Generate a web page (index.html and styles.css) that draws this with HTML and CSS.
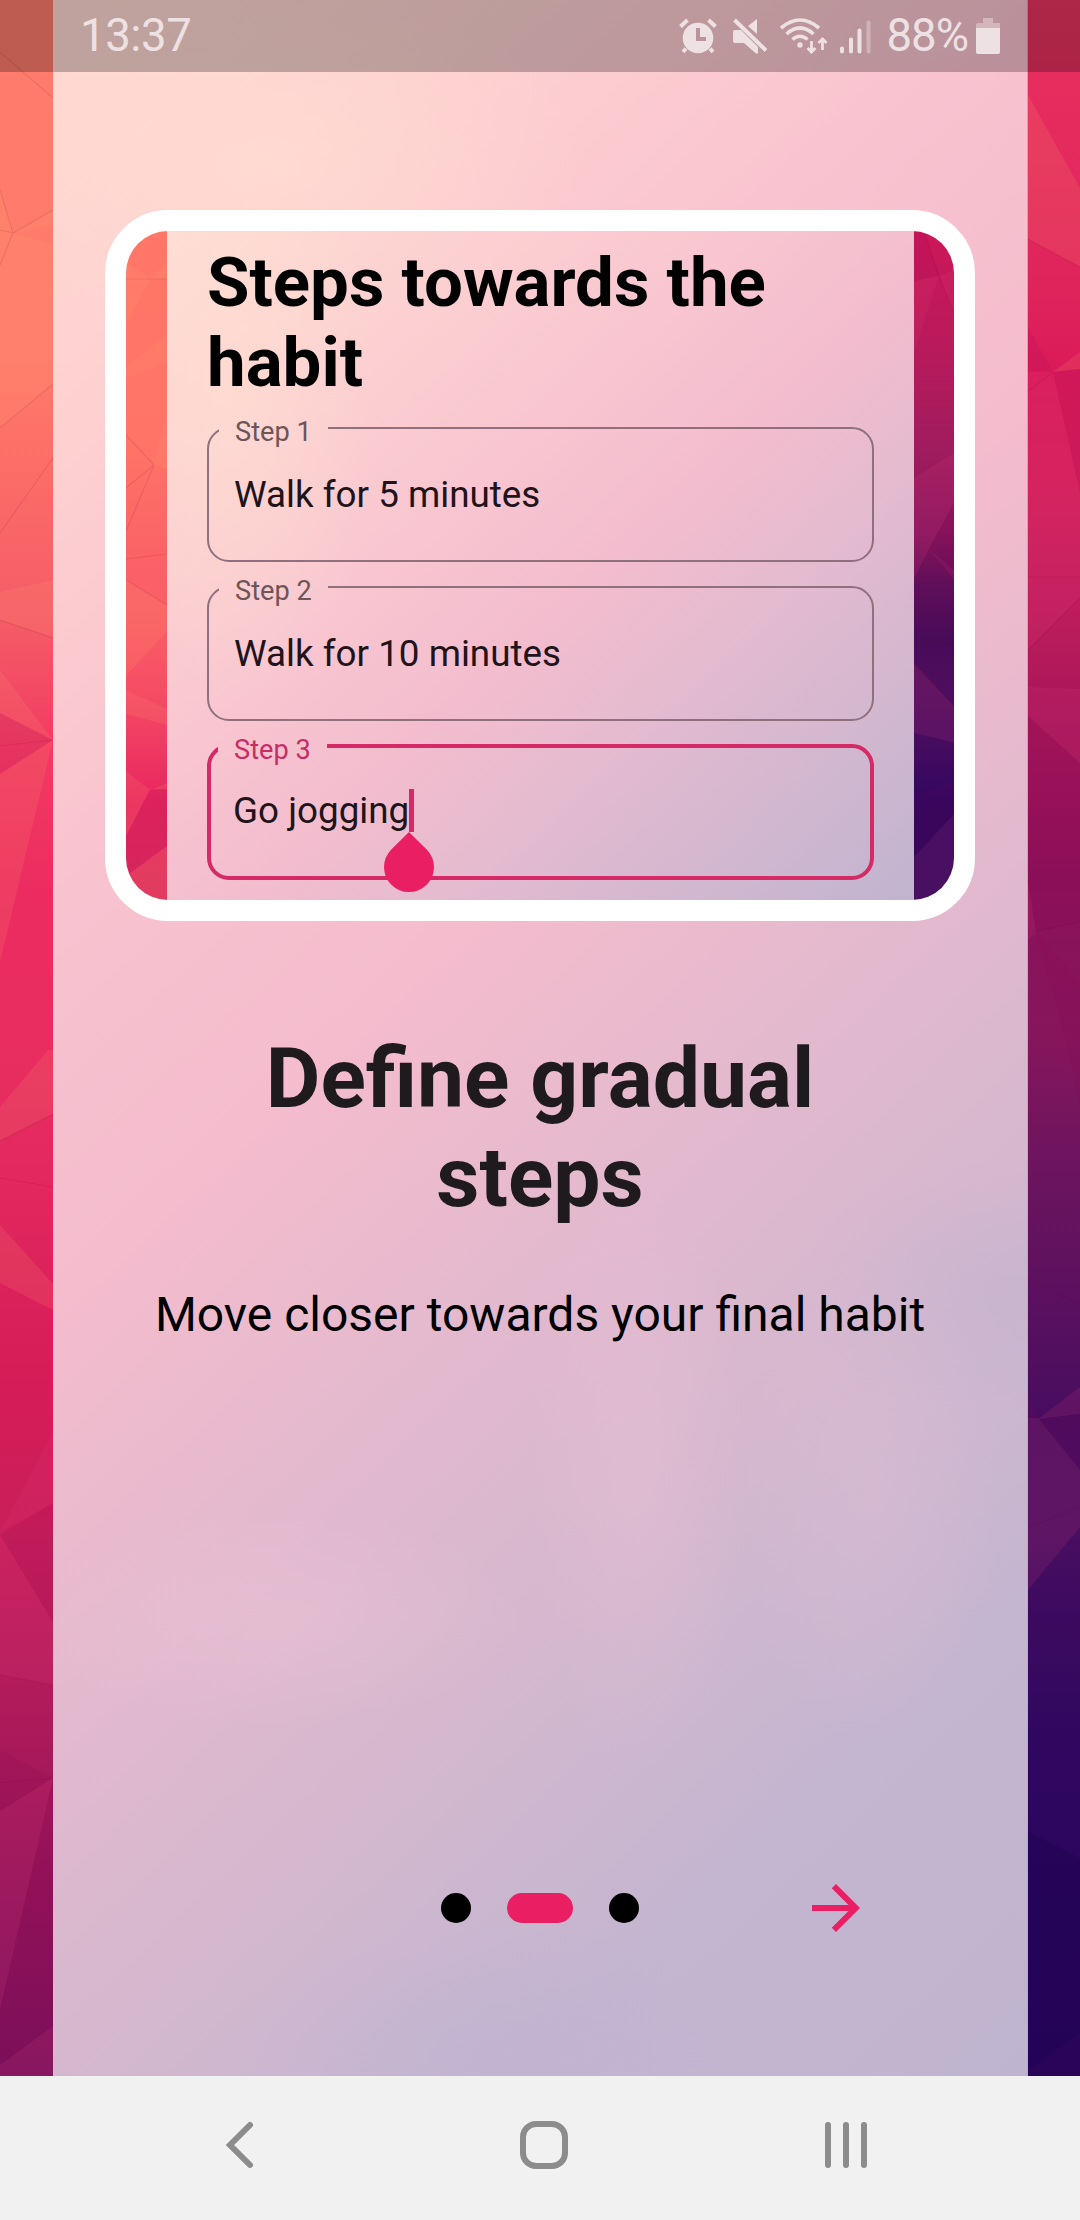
FILE: index.html
```html
<!DOCTYPE html>
<html lang="en">
<head>
<meta charset="utf-8">
<title>Define gradual steps</title>
<link rel="stylesheet" href="styles.css">
</head>
<body>
<div class="screen">
  <div class="stage">
    <svg class="strip" viewBox="0 0 53 2076" preserveAspectRatio="none">
      <defs><linearGradient id="wl" x1="0" y1="0" x2="0" y2="2076" gradientUnits="userSpaceOnUse">
        <stop offset="0" stop-color="#ff7b6b"/><stop offset=".17" stop-color="#ff7b6b"/><stop offset=".23" stop-color="#fc6c67"/><stop offset=".3" stop-color="#f55b67"/><stop offset=".36" stop-color="#f13b62"/><stop offset=".43" stop-color="#ec2c60"/><stop offset=".52" stop-color="#e72d60"/><stop offset=".6" stop-color="#de245c"/><stop offset=".67" stop-color="#d51c58"/><stop offset=".74" stop-color="#c81f5a"/><stop offset=".82" stop-color="#b01b5b"/><stop offset=".9" stop-color="#951459"/><stop offset="1" stop-color="#79115b"/>
      </linearGradient></defs>
      <path fill="url(#wl)" d="M0 0h53v2076H0z"/>
      <path class="glow" d="M0 190L13 233 53 210V225L13 233 53 244V384L0 428z"/>
      <path class="glow" d="M0 592L53 580V638L0 620zM0 670L53 740 0 713zM0 774L53 740 0 962zM0 1107L48 1050H53V1114L0 1141zM0 1225L53 1284V1310L0 1283z"/>
      <path class="glow-low" d="M0 1532L53 1432V1503zM0 1535L53 1622V1685L0 1675zM0 1811L53 1778 0 2010zM0 2065L53 2026V2076H0z"/>
      <path class="shade" d="M0 713L53 740 0 774zM0 1535L53 1503V1622zM0 1750L53 1778 0 1811zM53 1778V2026L0 2065V2010z"/>
      <path class="crease" d="M0 52L53 98M0 190L13 233 53 210M0 428L53 384M0 533L53 458M0 620L53 638M0 746L53 740M0 1141L53 1114M0 1178L53 1187M0 1675L53 1685M0 1783L53 1778M0 230L13 233 0 265"/>
    </svg>

    <main class="sheet">
      <section class="frame">
        <svg class="strip" viewBox="0 0 41 669" preserveAspectRatio="none">
          <defs><linearGradient id="cl" x1="0" y1="0" x2="0" y2="669" gradientUnits="userSpaceOnUse">
            <stop offset="0" stop-color="#ff7768"/><stop offset=".32" stop-color="#ff7467"/><stop offset=".49" stop-color="#fa6266"/><stop offset=".58" stop-color="#fa5e66"/><stop offset=".68" stop-color="#f64e65"/><stop offset=".75" stop-color="#f13e63"/><stop offset=".85" stop-color="#e8265f"/><stop offset="1" stop-color="#dc2c5e"/>
          </linearGradient></defs>
          <path fill="url(#cl)" d="M0 0h41v669H0z"/>
          <path class="glow" d="M0 31L24 48 41 31V48H24L0 94zM0 135L41 104V132L0 147zM28 234L41 180V238zM0 459L41 478V494L0 483zM0 540L24 559 41 552V558H24L0 605zM0 645L41 615V669H0zM0 349L41 374V400L0 445z"/>
          <path class="shade" d="M24 559H41V615L0 645V605z"/>
          <path class="crease" d="M0 204L28 234 0 257M28 234L0 300M0 328L41 323M0 349L41 374M0 48H41"/>
        </svg>
        <div class="capture">
          <h2 class="capture-title">Steps towards the habit</h2>
          <fieldset class="field"><legend>Step 1</legend><span class="value">Walk for 5 minutes</span></fieldset>
          <fieldset class="field"><legend>Step 2</legend><span class="value">Walk for 10 minutes</span></fieldset>
          <fieldset class="field active"><legend>Step 3</legend><span class="value">Go jogging<i class="caret"><svg class="handle" viewBox="0 0 50 61"><path fill="#e91e63" d="M25 0L42.7 17.4A25 25 0 1 1 7.3 17.4z"/></svg></i></span></fieldset>
        </div>
        <svg class="strip" viewBox="0 0 41 669" preserveAspectRatio="none">
          <defs><linearGradient id="cr" x1="0" y1="0" x2="0" y2="669" gradientUnits="userSpaceOnUse">
            <stop offset="0" stop-color="#cd1759"/><stop offset=".09" stop-color="#c2195a"/><stop offset=".18" stop-color="#b81a5b"/><stop offset=".33" stop-color="#9f1c5e"/><stop offset=".45" stop-color="#86155c"/><stop offset=".53" stop-color="#5f0e59"/><stop offset=".61" stop-color="#480b58"/><stop offset=".68" stop-color="#4e0e5e"/><stop offset=".78" stop-color="#430b60"/><stop offset=".85" stop-color="#30075f"/><stop offset="1" stop-color="#30075d"/>
          </linearGradient></defs>
          <path fill="url(#cr)" d="M0 0h41v669H0z"/>
          <path class="glow-low" d="M25 45L41 38V85L25 45 0 120V50zM0 247L41 222V270L15 318 0 307zM15 318L41 350V340zM0 348L15 318 0 307zM0 432L41 476V512L0 502zM0 626L41 582V669H0z"/>
          <path class="shade" d="M0 0H10L25 45 0 50zM15 318L41 270V350zM0 565L41 549V582L0 626z"/>
          <path class="crease" d="M0 410L41 414M0 432L41 476M10 0L25 45 41 85"/>
        </svg>
      </section>

      <h1 class="title">Define gradual steps</h1>
      <p class="subtitle">Move closer towards your final habit</p>

      <footer class="pager">
        <div class="dots"><span class="dot"></span><span class="dot current"></span><span class="dot"></span></div>
        <svg class="next" viewBox="0 0 24 24"><path fill="#e91e63" d="M12 4l-1.41 1.41L16.17 11H4v2h12.17l-5.58 5.59L12 20l8-8z"/></svg>
      </footer>
    </main>

    <svg class="strip" viewBox="0 0 52 2076" preserveAspectRatio="none">
      <defs><linearGradient id="wr" x1="0" y1="0" x2="0" y2="2076" gradientUnits="userSpaceOnUse">
        <stop offset="0" stop-color="#e7345f"/><stop offset=".05" stop-color="#e62c5e"/><stop offset=".14" stop-color="#df245c"/><stop offset=".18" stop-color="#da1a59"/><stop offset=".24" stop-color="#d2205b"/><stop offset=".29" stop-color="#c01d5b"/><stop offset=".34" stop-color="#a9175a"/><stop offset=".42" stop-color="#8c1159"/><stop offset=".5" stop-color="#86165c"/><stop offset=".55" stop-color="#70155e"/><stop offset=".62" stop-color="#5c115f"/><stop offset=".68" stop-color="#490d5f"/><stop offset=".74" stop-color="#480e60"/><stop offset=".77" stop-color="#3e0b60"/><stop offset=".84" stop-color="#2f075f"/><stop offset=".88" stop-color="#2d065f"/><stop offset="1" stop-color="#290459"/>
      </linearGradient></defs>
      <path fill="url(#wr)" d="M0 0h52v2076H0z"/>
      <path class="glow" d="M0 95L52 188V267L0 239zM25 372L52 352V369z"/>
      <path class="glow-low" d="M0 371H25L52 493V598L0 650zM0 687L52 689V763L0 716zM0 882L8 932 0 940zM10 1419L52 1387V1414zM0 1418H10L52 1470V1527L0 1590z"/>
      <path class="shade" d="M0 327L25 372H0zM25 372L52 369V493zM0 716L52 763V922L8 932 0 882zM40 1050L8 932 52 982V1105zM0 1395L10 1419H0zM10 1419L52 1414V1470z"/>
      <path fill="#1c0350" fill-opacity=".4" d="M0 1832L52 1858V2033L0 2070z"/>
      <path class="crease" d="M0 239L52 267M0 577H52M0 650L52 598M0 931H8L52 922M0 1277L52 1305M0 1528L52 1507M0 391L25 372"/>
    </svg>
  </div>

  <header class="status">
    <span class="clock">13:37</span>
    <svg class="status-icons" viewBox="0 0 194 36">
      <g fill="none" stroke="#eee1e3">
        <circle cx="19" cy="20" r="15.3" fill="#eee1e3" stroke="none"/>
        <path stroke-width="4" d="M1.500 8.500L8.500 2M29.500 2l7 6.500M7 30.500L4 34M31 30.500L34 34"/>
        <path stroke="#bb959b" stroke-width="4" d="M19 10v11h8"/>
        <path stroke-width="4" d="M55.500 2L87 32.500"/>
        <path fill="#eee1e3" stroke="none" d="M78 1v15l-9-8zM56 12h6l17 17v6.500h-2L65 25h-9q-2 0-2-2v-9q0-2 2-2z"/>
        <path stroke-width="3.600" d="M102 10Q121-6 140 10M107.500 16Q121 4 134.500 16M113.500 21.500Q121 15 128.500 21.500"/>
        <circle cx="121" cy="27" r="2.700" fill="#eee1e3" stroke="none"/>
        <path stroke-width="2.800" d="M132.500 23v11M128.500 30l4 4 4-4M143.500 32V21M139.500 25l4-4 4 4"/>
        <path stroke-width="4" stroke-linecap="round" d="M163 30.500v3M172 21.500v12M180.500 12.500v21"/>
        <path stroke-width="4" stroke-linecap="round" opacity=".4" d="M189.500 4.500v29"/>
      </g>
    </svg>
    <span class="percent">88%</span>
    <svg class="battery" viewBox="0 0 24 36"><path fill="#d2b6bc" d="M7 0h10v5h7v5H0V7q0-2 2-2h5z"/><path fill="#eee1e3" d="M0 10h24v24q0 2-2 2H2q-2 0-2-2z"/></svg>
  </header>

  <nav class="navbar">
    <svg class="nav-icon" viewBox="0 0 48 48"><path d="M33 4L13 24l20 20"/></svg>
    <svg class="nav-icon" viewBox="0 0 48 48"><rect x="3" y="3" width="42" height="42" rx="13"/></svg>
    <svg class="nav-icon" viewBox="0 0 48 48"><path d="M6 4v40M24 4v40M42 4v40"/></svg>
  </nav>
</div>
</body>
</html>
```
FILE: styles.css
```css
* { box-sizing: border-box; }

body {
  margin: 0;
  font-family: Roboto, "Liberation Sans", sans-serif;
  font-kerning: normal;
}

.screen {
  position: relative;
  width: 1080px;
  height: 2220px;
  display: flex;
  flex-direction: column;
  overflow: hidden;
}

.stage {
  height: 2076px;
  display: grid;
  grid-template-columns: 53px 1fr 52px;
}

.strip { display: block; width: 100%; height: 100%; }
.glow { fill: #ffa070; fill-opacity: .14; }
.glow-low { fill: #e0407c; fill-opacity: .14; }
.shade { fill: #8c0050; fill-opacity: .11; }
.crease { fill: none; stroke: #600030; stroke-opacity: .11; stroke-width: 1.2; }

.sheet {
  height: 2076px;
  padding-top: 210px;
  display: flex;
  flex-direction: column;
  align-items: center;
  border-right: 1px solid #d6a0b4;
  background:
    radial-gradient(ellipse 110px 300px at 60% 71%, rgba(240, 195, 215, .3), transparent),
    radial-gradient(ellipse 200px 130px at 97% 62%, rgba(185, 175, 208, .3), transparent),
    radial-gradient(ellipse 130px 260px at 84% 72%, rgba(225, 190, 212, .35), transparent),
    radial-gradient(ellipse 260px 110px at 22% 78%, rgba(240, 198, 214, .35), transparent),
    radial-gradient(ellipse 240px 130px at 45% 99%, rgba(185, 178, 210, .4), transparent),
    radial-gradient(ellipse 320px 180px at 22% 8%, rgba(255, 222, 210, .6), transparent),
    linear-gradient(137deg, #ffd9d2 0%, #fed3d1 12%, #fcccd0 20%, #f8c2cf 31%, #f4bccd 44%, #e4b9ce 57%, #d8b8ce 67%, #ceb7cf 75%, #c4b5d0 84%, #bfb4cf 100%);
}

.frame {
  width: 870px;
  height: 711px;
  border: 21px solid #fff;
  border-radius: 63px;
  display: grid;
  grid-template-columns: 41px 1fr 41px;
  overflow: hidden;
  background: #fff;
}

.capture {
  height: 669px;
  padding: 12px 40px 0;
  display: flex;
  flex-direction: column;
  background:
    radial-gradient(ellipse 150px 320px at 8% 25%, rgba(255, 222, 210, .6), transparent),
    linear-gradient(137deg, #feddd3 0%, #fcd0d1 22%, #f8c5d0 40%, #f3bdce 54%, #e6bbcf 67%, #d6b8cf 80%, #c1b4cf 100%);
}

.capture-title {
  margin: 0 0 5px;
  font-size: 69px;
  line-height: 80px;
  font-weight: 700;
  color: #000;
}

.field {
  width: 667px;
  height: 154px;
  min-width: 0;
  margin: 0 0 5px;
  padding: 25px 0 0 25px;
  border: 2px solid #91707e;
  border-radius: 22px;
}

.field legend {
  margin-left: -15px;
  padding: 8px 0 0 16px;
  width: 109px;
  font-size: 27.2px;
  line-height: 32px;
  color: #6f5459;
}

.field.active { border: 4.5px solid #d52a66; padding: 23px 0 0 22px; }
.field.active legend { color: #c92c64; }

.value {
  display: inline-block;
  position: relative;
  font-size: 36.8px;
  line-height: 44px;
  color: #20141a;
}

.caret {
  position: absolute;
  left: 100%;
  top: 0;
  width: 5px;
  height: 43px;
  background: #d52a66;
}

.handle {
  position: absolute;
  left: -25px;
  top: 43px;
  width: 50px;
  height: 61px;
}

.title {
  width: 640px;
  margin: 108px 0 0;
  font-size: 84px;
  line-height: 99px;
  font-weight: 700;
  text-align: center;
  color: #1f1a1d;
}

.subtitle {
  margin: 60px 0 0;
  font-size: 48px;
  line-height: 56px;
  white-space: nowrap;
  color: #000;
}

.pager {
  width: 100%;
  margin: auto 0 132px;
  padding: 0 155px 0 388px;
  display: flex;
  align-items: center;
  justify-content: space-between;
}

.dots { display: flex; gap: 36px; }
.dot { width: 30px; height: 30px; border-radius: 15px; background: #000; }
.dot.current { width: 66px; background: #e91e63; }
.next { display: block; width: 72px; height: 72px; }

.status {
  position: absolute;
  inset: 0 0 auto;
  height: 72px;
  padding: 0 80px;
  display: flex;
  align-items: center;
  background: rgba(0, 0, 0, .25);
  color: #eee1e3;
  font-size: 45.5px;
  line-height: 72px;
}

.clock { margin-right: auto; letter-spacing: -.4px; }
.status-icons { width: 194px; height: 36px; margin-right: 14px; }
.percent { letter-spacing: -1px; }
.battery { width: 24px; height: 36px; margin-left: 8px; }

.navbar {
  height: 144px;
  padding: 0 210px 0 217px;
  padding-bottom: 6px;
  display: flex;
  align-items: center;
  justify-content: space-between;
  background: #f1f1f1;
}

.nav-icon {
  width: 48px;
  height: 48px;
  fill: none;
  stroke: #8c8c8c;
  stroke-width: 6;
  stroke-linecap: round;
}
```
